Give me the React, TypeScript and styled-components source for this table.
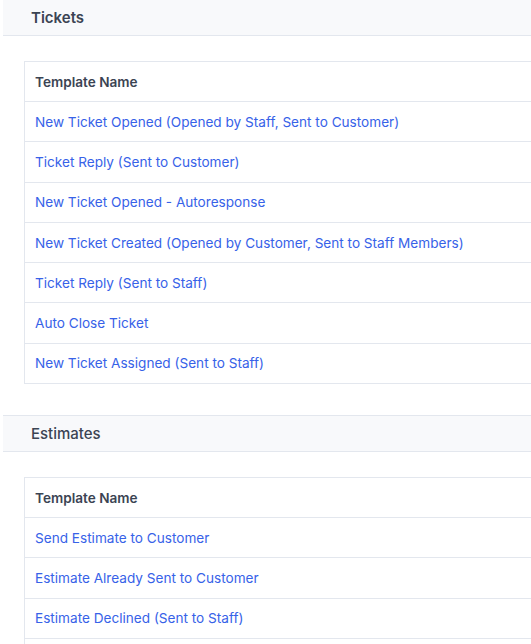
import React from "react";
import styled, { createGlobalStyle } from "styled-components";

const Global = createGlobalStyle`
  html, body { margin: 0; padding: 0; background: #fff; overflow: hidden; }
  body { font-family: Inter, "Noto Sans", sans-serif; }
`;

const Page = styled.div`
  margin: -1px 0 0 3px;
  width: 620px;
  display: flex;
  flex-direction: column;
`;

const Section = styled.section<{ $first?: boolean }>`
  display: flex;
  flex-direction: column;
  margin-top: ${(p) => (p.$first ? "0" : "31px")};
`;

const Band = styled.div<{ $first?: boolean }>`
  height: 35px;
  display: flex;
  align-items: center;
  padding-left: 28px;
  background: #f8f9fb;
  border-top: 1px solid ${(p) => (p.$first ? "transparent" : "#e3e7ee")};
  border-bottom: 1px solid #e3e7ee;
`;

const Title = styled.h2<{ $weight: number }>`
  margin: 0;
  font-size: 15px;
  font-weight: ${(p) => p.$weight};
  color: #3b4453;
`;

const Table = styled.div`
  margin: 25px 0 0 21px;
  border: 1px solid #e3e7ee;
  display: flex;
  flex-direction: column;
`;

const HeadRow = styled.div`
  height: 39px;
  display: flex;
  align-items: center;
  padding-left: 10px;
  font-size: 13.6px;
  font-weight: 600;
  color: #3b4453;
`;

const Row = styled.a`
  height: 39.3px;
  display: flex;
  align-items: center;
  padding-left: 10px;
  border-top: 1px solid #e3e7ee;
  font-size: 13.6px;
  color: #3762e8;
  text-decoration: none;
`;

const sections = [
  {
    title: "Tickets",
    weight: 600,
    rows: [
      "New Ticket Opened (Opened by Staff, Sent to Customer)",
      "Ticket Reply (Sent to Customer)",
      "New Ticket Opened - Autoresponse",
      "New Ticket Created (Opened by Customer, Sent to Staff Members)",
      "Ticket Reply (Sent to Staff)",
      "Auto Close Ticket",
      "New Ticket Assigned (Sent to Staff)",
    ],
  },
  {
    title: "Estimates",
    weight: 500,
    rows: [
      "Send Estimate to Customer",
      "Estimate Already Sent to Customer",
      "Estimate Declined (Sent to Staff)",
      "Estimate Accepted (Sent to Staff)",
    ],
  },
];

export default function App() {
  return (
    <>
      <Global />
      <Page>
        {sections.map((s, i) => (
          <Section key={s.title} $first={i === 0}>
            <Band $first={i === 0}>
              <Title $weight={s.weight}>{s.title}</Title>
            </Band>
            <Table>
              <HeadRow>Template Name</HeadRow>
              {s.rows.map((r) => (
                <Row key={r} href="#">
                  {r}
                </Row>
              ))}
            </Table>
          </Section>
        ))}
      </Page>
    </>
  );
}
